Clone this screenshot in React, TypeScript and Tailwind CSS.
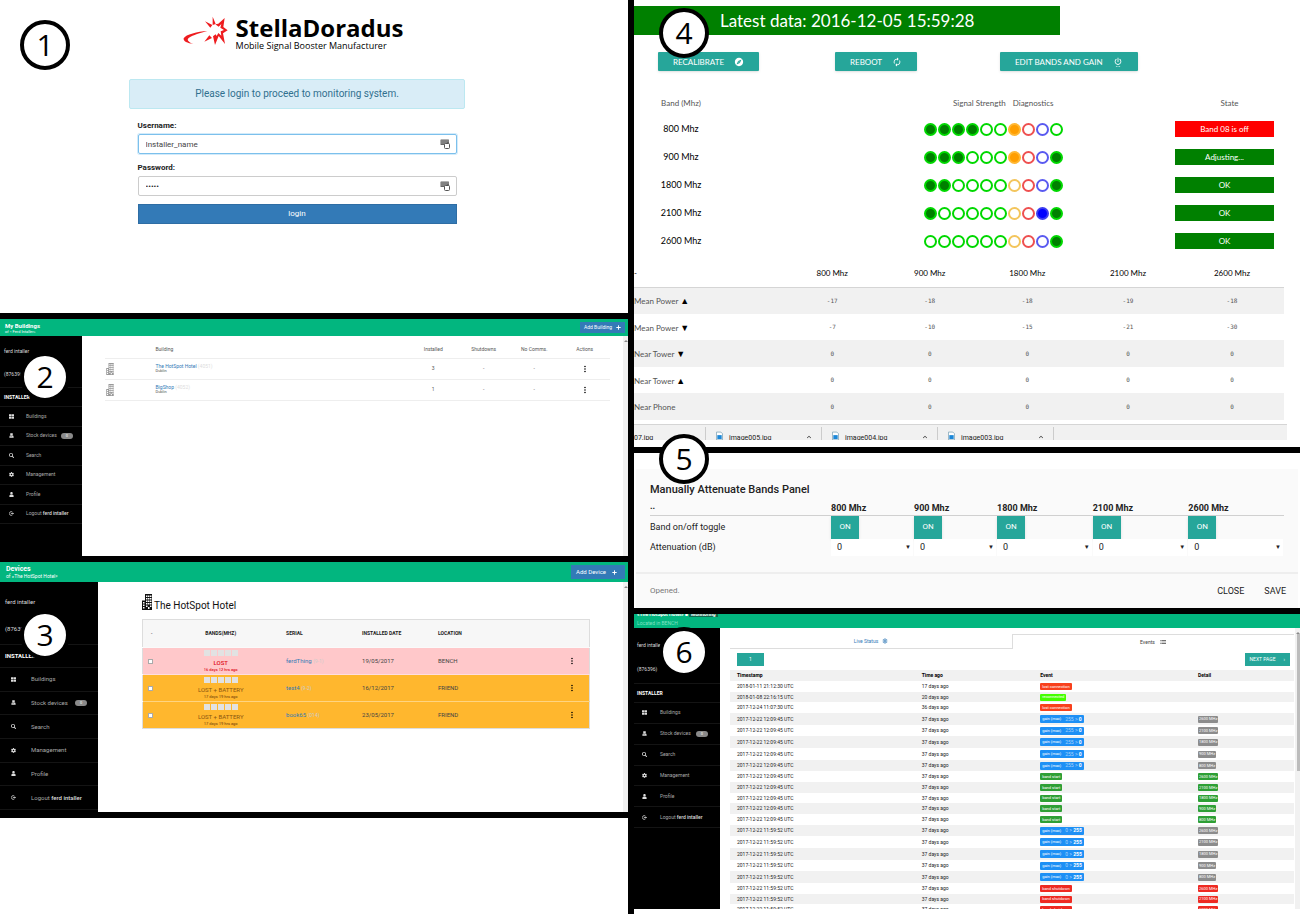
import React from "react";
import clsx from "clsx";
import { FaCog, FaPlus, FaSearch, FaThLarge, FaUser } from "react-icons/fa";
import {
  MdAutorenew,
  MdExplore,
  MdKeyboardArrowUp,
  MdList,
  MdMoreVert,
  MdOutlineSettings,
  MdSettingsPower,
} from "react-icons/md";

const BANDS = ["800 Mhz", "900 Mhz", "1800 Mhz", "2100 Mhz", "2600 Mhz"];

function StepBadge({ step, className }: { step: number; className: string }) {
  return (
    <div
      className={clsx(
        "absolute z-10 flex size-[50px] items-center justify-center rounded-full border-4 border-black bg-white font-['Open_Sans',sans-serif] text-3xl leading-none text-black",
        className
      )}
    >
      {step}
    </div>
  );
}

/* ---------- drawings ---------- */

function StarLogo() {
  return (
    <svg viewBox="0 0 135 90" className="h-[30px] w-[45px] shrink-0" fill="#ee1c1f" aria-hidden="true">
      <path d="M73 45C44 47 8 55 2 67c-2 9 11 15 29 17C15 77 10 71 18 65c12-8 34-14 55-20z" />
      <path d="M66 16l22 11-6 8zM89 2l9 22-9 3zM64 77l15-19 8 8z" />
      <path d="M125 6l-4 27 13 10-14 9 6 32-19-24-11 27-6-26 8-6 3 5 5-9 9 8-2-13 10-4-11-7 3-11-8 8-10-7 9-2z" />
    </svg>
  );
}

function BuildingIcon({ className }: { className: string }) {
  return (
    <svg viewBox="0 0 20 32" className={className} fill="currentColor" aria-hidden="true">
      <path
        fillRule="evenodd"
        d="M6 0h14v32H0V13h6zM8 3v3h3V3zm4 0v3h3V3zm4 0v3h3V3zM8 8v3h3V8zm4 0v3h3V8zm4 0v3h3V8zM8 13v3h3v-3zm4 0v3h3v-3zm4 0v3h3v-3zM8 18v3h3v-3zm4 0v3h3v-3zm4 0v3h3v-3zM8 23v3h3v-3zm8 0v3h3v-3zm-4 3v4h3v-4zM2 16v3h3v-3zm0 5v3h3v-3zm0 5v3h3v-3z"
      />
    </svg>
  );
}

function StockIcon() {
  return (
    <svg viewBox="0 0 16 16" fill="currentColor" className="size-full" aria-hidden="true">
      <path d="M4 1h8v7H4zM2 9h12l1 6H1zm2 3v1h6v-1z" />
    </svg>
  );
}

function LogoutIcon() {
  return (
    <svg viewBox="0 0 16 16" fill="none" stroke="currentColor" strokeWidth="2.4" className="size-full" aria-hidden="true">
      <path d="M11 3.5A6 6 0 1 0 11 12.5M6 8h7" />
      <path d="M11.5 4.5L16 8l-4.5 3.5z" fill="currentColor" stroke="none" />
    </svg>
  );
}

function KeyFillIcon() {
  return (
    <svg viewBox="0 0 20 20" className="pointer-events-none absolute top-[5px] right-[7px] size-2.5" aria-hidden="true">
      <rect x="1" y="1" width="17" height="11" rx="1" fill="#666" />
      <path d="M3 4h2m2 0h2m2 0h2m2 0h2M3 8h2m2 0h2m2 0h2" stroke="#fff" strokeWidth="1.5" />
      <rect x="9" y="9" width="10" height="10" rx="2" fill="#fff" stroke="#555" strokeWidth="2" />
    </svg>
  );
}

/* ---------- shared sidebar ---------- */

const NAV = [
  { label: "Buildings", icon: <FaThLarge className="size-full" /> },
  { label: "Stock devices", icon: <StockIcon />, count: 0 },
  { label: "Search", icon: <FaSearch className="size-full" /> },
  { label: "Management", icon: <FaCog className="size-full" /> },
  { label: "Profile", icon: <FaUser className="size-full" /> },
  { label: "Logout", icon: <LogoutIcon />, user: "ferd intaller" },
];

type SidebarProps = {
  className: string;
  nameClass: string;
  idClass: string;
  roleClass: string;
  navClass: string;
  linkClass: string;
};

function Sidebar({ className, nameClass, idClass, roleClass, navClass, linkClass }: SidebarProps) {
  return (
    <aside className={clsx("shrink-0 bg-black leading-none whitespace-nowrap text-[#ddd]", className)}>
      <p className={clsx("flex items-center", nameClass)}>ferd intaller</p>
      <p className={clsx("flex items-center", idClass)}>(876396)</p>
      <p className={clsx("flex items-center border-y border-[#141414] font-bold text-white", roleClass)}>INSTALLER</p>
      <nav className={clsx("grid auto-rows-fr", navClass)}>
        {NAV.map((item) => (
          <a key={item.label} href="#" className={clsx("flex items-center border-b border-[#141414] text-[#aaa]", linkClass)}>
            <span className="size-[5px] shrink-0 text-[#ddd]">{item.icon}</span>
            <span>
              {item.label} {item.user && <b className="font-medium text-[#ddd]">{item.user}</b>}
            </span>
            {item.count !== undefined && (
              <span className="-ml-2 rounded-full bg-[#8a8a8a] px-[5px] py-px text-[4px] text-white">{item.count}</span>
            )}
          </a>
        ))}
      </nav>
    </aside>
  );
}

function ScrollTrack({ thumb }: { thumb?: boolean }) {
  return (
    <div className="w-[5px] shrink-0 bg-[#f1f1f1]">
      <div className="mx-auto mt-1 size-0 border-x-2 border-b-2 border-x-transparent border-b-[#888]" />
      {thumb && <div className="ml-0.5 h-[137px] bg-[#bcbcbc]" />}
    </div>
  );
}

/* ---------- 1: login ---------- */

function LoginPanel() {
  return (
    <section className="relative flex flex-col items-center bg-white pt-4 pr-[34px] pb-[89px]">
      <StepBadge step={1} className="top-5 left-5" />
      <div className="flex gap-2 pr-2 font-['Open_Sans',sans-serif] text-black">
        <StarLogo />
        <div>
          <h1 className="text-2xl leading-6 font-bold">StellaDoradus</h1>
          <p className="text-[9px] leading-3">Mobile Signal Booster Manufacturer</p>
        </div>
      </div>
      <p className="mt-[27px] w-[336px] rounded-xs border border-[#bce8f1] bg-[#d9edf7] py-1.5 text-center text-[10px] leading-4 text-[#31708f]">
        Please login to proceed to monitoring system.
      </p>
      <form className="mt-[11px] flex w-[319px] flex-col text-[8px] text-[#222]">
        <label htmlFor="username" className="leading-3 font-bold">
          Username:
        </label>
        <div className="relative mt-0.5">
          <input
            id="username"
            defaultValue="Installer_name"
            className="h-5 w-full rounded-xs border border-[#7cc0ec] px-[7px] text-[#444] ring-1 ring-[#d3ebfa] outline-none"
          />
          <KeyFillIcon />
        </div>
        <label htmlFor="password" className="mt-2 leading-3 font-bold">
          Password:
        </label>
        <div className="relative mt-0.5">
          <input
            id="password"
            type="password"
            defaultValue="ferd1"
            className="h-5 w-full rounded-xs border border-[#ccc] px-[7px] text-[#222] outline-none"
          />
          <KeyFillIcon />
        </div>
        <button type="button" className="mt-2 h-5 border border-[#2e6da4] bg-[#337ab7] text-white">
          login
        </button>
      </form>
    </section>
  );
}

/* ---------- 2: buildings ---------- */

const BUILDINGS = [
  { name: "The HotSpot Hotel", code: "(4051)", city: "Dublin", installed: 3 },
  { name: "BigShop", code: "(4052)", city: "Dublin", installed: 1 },
];

function BuildingsPanel() {
  return (
    <section className="relative bg-white text-[5px] leading-none">
      <StepBadge step={2} className="top-[33px] left-5" />
      <header className="flex h-[17px] items-center justify-between bg-[#02b67f] pr-[3px] pl-[5px] text-white">
        <div>
          <h2 className="text-[6px] leading-[7px] font-bold">My Buildings</h2>
          <p className="text-[4px] leading-[5px]">of « Ferd Intaller»</p>
        </div>
        <button type="button" className="flex h-[11px] items-center gap-1 bg-[#337ab7] px-1">
          Add Building <FaPlus className="size-[5px]" />
        </button>
      </header>
      <div className="flex">
        <Sidebar
          className="w-[82px] pb-8"
          nameClass="h-[30px] pl-1"
          idClass="h-4 pl-1"
          roleClass="mt-[5px] h-5 pl-1"
          navClass="h-[117px]"
          linkClass="gap-3 pl-[9px]"
        />
        <div className="flex-1 pr-[13px] pl-[23px]">
          <table className="w-full table-fixed text-center text-[#555]">
            <thead>
              <tr className="h-[22px] border-b border-[#eee]">
                <th className="w-[10%]" />
                <th className="w-[50%] pt-1.5 text-left font-normal">Building</th>
                <th className="pt-1.5 font-normal">Installed</th>
                <th className="pt-1.5 font-normal">Shutdowns</th>
                <th className="pt-1.5 font-normal">No Comms.</th>
                <th className="pt-1.5 font-normal">Actions</th>
              </tr>
            </thead>
            <tbody>
              {BUILDINGS.map((b) => (
                <tr key={b.name} className="h-[21px] border-b border-[#eee]">
                  <td>
                    <BuildingIcon className="ml-px h-3 w-2 text-[#999]" />
                  </td>
                  <td className="text-left">
                    <p>
                      <a href="#" className="text-[#337ab7]">
                        {b.name}
                      </a>{" "}
                      <span className="text-[#ddd]">{b.code}</span>
                    </p>
                    <p className="text-[4px]">{b.city}</p>
                  </td>
                  <td>{b.installed}</td>
                  <td>-</td>
                  <td>-</td>
                  <td>
                    <button type="button" aria-label="Actions" className="align-middle">
                      <MdMoreVert className="size-2.5 text-black" />
                    </button>
                  </td>
                </tr>
              ))}
            </tbody>
          </table>
        </div>
        <ScrollTrack />
      </div>
    </section>
  );
}

/* ---------- 3: devices ---------- */

const DEVICES = [
  { serial: "ferdThing", code: "(9-1)", status: "LOST", ago: "16 days 12 hrs ago", date: "19/05/2017", location: "BENCH", lost: true },
  { serial: "test4", code: "(9-2)", status: "LOST + BATTERY", ago: "17 days 19 hrs ago", date: "16/12/2017", location: "FRIEND", lost: false },
  { serial: "book65", code: "(014)", status: "LOST + BATTERY", ago: "17 days 19 hrs ago", date: "23/05/2017", location: "FRIEND", lost: false },
];

function DevicesPanel() {
  return (
    <section className="relative bg-white text-[6px] leading-none">
      <StepBadge step={3} className="top-12 left-5" />
      <header className="flex h-5 items-center justify-between bg-[#02b67f] pr-[3px] pl-1.5 text-white">
        <div>
          <h2 className="text-[7px] leading-2 font-bold">Devices</h2>
          <p className="text-[5px] leading-1.5">of «The HotSpot Hotel»</p>
        </div>
        <button type="button" className="flex h-3.5 items-center gap-1.5 bg-[#337ab7] pr-2 pl-[5px]">
          Add Device <FaPlus className="size-[5px]" />
        </button>
      </header>
      <div className="flex">
        <Sidebar
          className="w-[98px] pb-0.5"
          nameClass="h-10 pl-[5px]"
          idClass="h-3.5 pl-[5px]"
          roleClass="mt-2 h-6 pl-[5px]"
          navClass="h-[142px]"
          linkClass="gap-[15px] pl-[11px]"
        />
        <div className="flex-1 pt-3 pr-[33px] pl-11">
          <h3 className="flex items-end gap-0.5 text-[10px] leading-[9px] text-[#111]">
            <BuildingIcon className="h-4 w-2.5" />
            The HotSpot Hotel
          </h3>
          <table className="mt-[9px] w-full table-fixed border border-[#ddd] text-left text-[#444]">
            <thead>
              <tr className="h-7 bg-[#f7f7f7] text-[5px] text-[#222]">
                <th className="w-[4%] text-center font-normal">-</th>
                <th className="w-[27%] text-center font-bold">BANDS(MHZ)</th>
                <th className="w-[17%] pl-[5px] font-bold">SERIAL</th>
                <th className="w-[17%] pl-[5px] font-bold">INSTALLED DATE</th>
                <th className="w-[17%] pl-[5px] font-bold">LOCATION</th>
                <th />
              </tr>
            </thead>
            <tbody>
              {DEVICES.map((d) => (
                <tr key={d.serial} className={clsx("h-[27px] border-t border-white/40", d.lost ? "bg-[#ffc8ca]" : "bg-[#ffb72e]")}>
                  <td className="text-center">
                    <input
                      type="checkbox"
                      aria-label={`Select ${d.serial}`}
                      className="block size-[5px] appearance-none border border-[#aaa] bg-white ml-[5px]"
                    />
                  </td>
                  <td className={clsx("text-center", d.lost ? "text-[#e0101c]" : "text-[#8a5510]")}>
                    <div className="flex justify-center gap-px">
                      {[0, 1, 2, 3, 4].map((n) => (
                        <span key={n} className="size-1.5 bg-[#e2e2e2]" />
                      ))}
                    </div>
                    <p className={clsx("mt-1", d.lost && "font-medium")}>{d.status}</p>
                    <p className="mt-0.5 text-[4px] font-medium">{d.ago}</p>
                  </td>
                  <td className="pl-[5px]">
                    <a href="#" className="text-[#337ab7]">
                      {d.serial}
                    </a>{" "}
                    <span className="text-[5px] text-[#ccc]">{d.code}</span>
                  </td>
                  <td className="pl-[5px]">{d.date}</td>
                  <td className="pl-[5px]">{d.location}</td>
                  <td className="pr-3 text-right">
                    <button type="button" aria-label="Actions" className="align-middle">
                      <MdMoreVert className="size-2.5 text-black" />
                    </button>
                  </td>
                </tr>
              ))}
            </tbody>
          </table>
        </div>
        <ScrollTrack />
      </div>
    </section>
  );
}

/* ---------- 4: live status ---------- */

const DOT = {
  on: "border-[#00d800] bg-[#008000]",
  off: "border-[#00d800] bg-white",
  orangeOn: "border-[#ffb733] bg-[#ff9e00]",
  orange: "border-[#f3c55c] bg-white",
  red: "border-[#ee5050] bg-white",
  blueOn: "border-[#3c3cf0] bg-[#0000ff]",
  blue: "border-[#5a5af0] bg-white",
};

type Dot = keyof typeof DOT;

const SIGNALS: { strength: number; diagnostics: Dot[]; state: string; error?: boolean }[] = [
  { strength: 4, diagnostics: ["orangeOn", "red", "blue", "off"], state: "Band 08 is off", error: true },
  { strength: 3, diagnostics: ["orangeOn", "red", "blue", "on"], state: "Adjusting..." },
  { strength: 2, diagnostics: ["orange", "red", "blue", "on"], state: "OK" },
  { strength: 1, diagnostics: ["orange", "red", "blueOn", "on"], state: "OK" },
  { strength: 0, diagnostics: ["orange", "red", "blue", "on"], state: "OK" },
];

const READINGS = [
  { label: "Mean Power", arrow: "▲", values: [-17, -18, -18, -19, -18] },
  { label: "Mean Power", arrow: "▼", values: [-7, -10, -15, -21, -30] },
  { label: "Near Tower", arrow: "▼", values: [0, 0, 0, 0, 0] },
  { label: "Near Tower", arrow: "▲", values: [0, 0, 0, 0, 0] },
  { label: "Near Phone", arrow: "", values: [0, 0, 0, 0, 0] },
];

function SignalDots({ strength, diagnostics }: { strength: number; diagnostics: Dot[] }) {
  const bars: Dot[] = [0, 1, 2, 3, 4, 5].map((n) => (n < strength ? "on" : "off"));
  return (
    <div className="flex gap-px">
      {[...bars, ...diagnostics].map((dot, i) => (
        <span key={i} className={clsx("size-[13px] rounded-full border-2", DOT[dot])} />
      ))}
    </div>
  );
}

function ActionButton({ children }: { children: React.ReactNode }) {
  return (
    <button
      type="button"
      className="flex h-[19px] items-center gap-2.5 rounded-[1px] bg-[#26a69a] px-[15px] text-[8px] leading-none text-white shadow-sm"
    >
      {children}
    </button>
  );
}

function StatusPanel() {
  return (
    <section className="relative bg-white pt-1.5 pb-[7px] font-[Lato,sans-serif] text-[#222]">
      <StepBadge step={4} className="top-2 left-[25px]" />
      <h2 className="w-[64%] bg-[#008000] pl-[86px] text-[17px] leading-[29px] text-white">Latest data: 2016-12-05 15:59:28</h2>
      <div className="mt-[17px] grid grid-cols-[177fr_165fr_300fr] justify-items-start pl-6">
        <ActionButton>
          RECALIBRATE <MdExplore className="size-2.5" />
        </ActionButton>
        <ActionButton>
          REBOOT <MdAutorenew className="size-2.5" />
        </ActionButton>
        <ActionButton>
          EDIT BANDS AND GAIN <MdSettingsPower className="size-2.5" />
        </ActionButton>
      </div>

      <table className="mt-5 w-full table-fixed text-left text-[8px]">
        <thead>
          <tr className="h-6 leading-6 text-[#555]">
            <th className="w-[290px] font-normal">
              <span className="block w-[94px] text-center">Band (Mhz)</span>
            </th>
            <th className="pl-[29px] font-normal">
              <span className="mr-[7px]">Signal Strength</span>
              <span>Diagnostics</span>
            </th>
            <th className="w-[125px] pr-4 text-center font-normal">State</th>
          </tr>
        </thead>
        <tbody>
          {SIGNALS.map((s, i) => (
            <tr key={BANDS[i]} className="h-7">
              <td>
                <span className="block w-[94px] text-center text-[9px] text-black">{BANDS[i]}</span>
              </td>
              <td>
                <SignalDots strength={s.strength} diagnostics={s.diagnostics} />
              </td>
              <td className="pr-[26px]">
                <p className={clsx("text-center leading-4 text-white", s.error ? "bg-[#ff0000]" : "bg-[#008000]")}>{s.state}</p>
              </td>
            </tr>
          ))}
        </tbody>
      </table>

      <div className="pt-[5px] pr-4">
        <table className="w-full table-fixed text-center text-[8px] leading-none text-[#555]">
          <thead>
            <tr className="h-[27px] border-b border-[#d5d5d5] text-[8px] text-black">
              <th className="w-[23%] text-left font-normal">-</th>
              {BANDS.map((band, i) => (
                <th key={band} className={clsx("font-normal", i < 3 ? "w-[15%]" : "w-[16%]")}>
                  {band}
                </th>
              ))}
            </tr>
          </thead>
          <tbody>
            {READINGS.map((row) => (
              <tr key={row.label + row.arrow} className="h-[26px] odd:h-[27px] odd:bg-[#f1f1f1]">
                <td className="text-left">
                  {row.label} <span className="text-[9px] text-black">{row.arrow}</span>
                </td>
                {row.values.map((value, i) => (
                  <td key={i} className="font-['DejaVu_Sans_Mono',monospace] text-[6px]">
                    {value}
                  </td>
                ))}
              </tr>
            ))}
          </tbody>
        </table>
      </div>

      {/* Browser download shelf, cut off at the bottom */}
      <div className="mt-1 mr-[13px] flex h-4 overflow-hidden border-t border-[#d5d5d5] bg-[#f1f1f1] pt-0.5 font-[Roboto,sans-serif] text-[7px] leading-[22px]">
        <p className="w-[72px] border-r border-[#ccc]">07.jpg</p>
        {["image005.jpg", "image004.jpg", "image003.jpg"].map((file) => (
          <p key={file} className="flex w-[116px] border-r border-[#ccc] pr-2 pl-2.5">
            <svg viewBox="0 0 8 10" className="mt-1 mr-1.5 h-2.5 w-[7px] shrink-0" aria-hidden="true">
              <path d="M.5.5h5l2 2v7h-7z" fill="#fff" stroke="#8ab" />
              <path d="M1.5 4h5v4.5h-5z" fill="#1b87d8" />
            </svg>
            <span className="flex-1">{file}</span>
            <MdKeyboardArrowUp className="mt-1.5 size-2" />
          </p>
        ))}
      </div>
    </section>
  );
}

/* ---------- 5: attenuation ---------- */

function AttenuationPanel() {
  return (
    <section className="relative bg-white px-0.5 pt-4 text-[#222]">
      <StepBadge step={5} className="-top-[19px] left-[25px]" />
      <div className="bg-[#fafafa]">
        <div className="px-3.5 pt-3 pb-4">
          <h2 className="text-[11px] leading-[18px] font-medium">Manually Attenuate Bands Panel</h2>
          <table className="w-full table-fixed text-left text-[9px] leading-none">
            <thead>
              <tr className="h-4 border-b border-[#d0d0d0] font-bold">
                <th className="w-[181px]">..</th>
                {BANDS.map((band, i) => (
                  <th key={band} className={clsx("pt-1", i < 2 && "w-[83px]")}>
                    {band}
                  </th>
                ))}
              </tr>
            </thead>
            <tbody>
              <tr className="h-6">
                <td>Band on/off toggle</td>
                {BANDS.map((band) => (
                  <td key={band} className="align-top">
                    <button type="button" className="block h-[23px] w-7 bg-[#26a69a] text-[8px] text-white shadow-sm">
                      ON
                    </button>
                  </td>
                ))}
              </tr>
              <tr>
                <td>Attenuation (dB)</td>
                {BANDS.map((band) => (
                  <td key={band} className="pr-px">
                    <div className="relative bg-white">
                      <select aria-label={`Attenuation ${band}`} className="block h-[17px] w-full appearance-none pl-1.5">
                        <option>0</option>
                      </select>
                      <span className="pointer-events-none absolute top-[5px] right-0.5 text-[6px]">▼</span>
                    </div>
                  </td>
                ))}
              </tr>
            </tbody>
          </table>
        </div>
        <footer className="flex items-center gap-5 border-t-2 border-[#eee] pt-[11px] pr-3 pb-[11px] pl-3.5 text-[9px] leading-3">
          <p className="flex-1 text-[8px] text-[#777]">Opened.</p>
          <button type="button">CLOSE</button>
          <button type="button">SAVE</button>
        </footer>
      </div>
    </section>
  );
}

/* ---------- 6: events ---------- */

const PILL = {
  lost: "bg-[#f8401c]",
  back: "bg-[#44ff00]",
  gain: "bg-[#1e90f5]",
  start: "bg-[#2e9f35]",
  shutdown: "bg-[#ee2a22]",
  muted: "bg-[#8c8c8c]",
};

type EventKind = "lost" | "back" | "gain" | "start" | "shutdown";
type EventRow = { time: string; ago: string; kind: EventKind; from?: number; to?: number; detail?: string };

const EVENT_LABEL = {
  lost: "lost connection",
  back: "reconnected",
  gain: "gain (max)",
  start: "band start",
  shutdown: "band shutdown",
};

const MHZ = ["2600 MHz", "2100 MHz", "1800 MHz", "900 MHz", "800 MHz"];
const NOON = { time: "2017-12-22 12:09:45 UTC", ago: "37 days ago" };
const BEFORE_NOON = { time: "2017-12-22 11:59:52 UTC", ago: "37 days ago" };

const EVENTS: EventRow[] = [
  { time: "2018-01-11 21:12:30 UTC", ago: "17 days ago", kind: "lost" },
  { time: "2018-01-08 22:16:15 UTC", ago: "20 days ago", kind: "back" },
  { time: "2017-12-24 11:07:30 UTC", ago: "36 days ago", kind: "lost" },
  ...MHZ.map((detail) => ({ ...NOON, kind: "gain" as const, from: 255, to: 0, detail })),
  ...MHZ.map((detail) => ({ ...NOON, kind: "start" as const, detail })),
  ...MHZ.map((detail) => ({ ...BEFORE_NOON, kind: "gain" as const, from: 0, to: 255, detail })),
  ...MHZ.slice(0, 3).map((detail) => ({ ...BEFORE_NOON, kind: "shutdown" as const, detail })),
];

function rowHeight(kind: EventKind, index: number) {
  if (kind === "gain") return index % 3 === 1 ? "h-[11px]" : "h-3";
  return index % 3 === 1 ? "h-2.5" : "h-[11px]";
}

function EventsPanel() {
  return (
    <section className="relative bg-white text-[5px] leading-none">
      <StepBadge step={6} className="top-[13px] left-[25px]" />
      <header className="h-3.5 overflow-hidden bg-[#02b67f] pl-[3px] text-white">
        <p className="-mt-0.5 h-1.5 font-bold">
          «The HotSpot Hotel» ■ <span className="bg-[#12694e] px-0.5">Monitoring</span>
        </p>
        <p className="mt-[3px] text-[#7fe0c2]">Located in BENCH</p>
      </header>
      <div className="flex h-[281px] overflow-hidden">
        <Sidebar
          className="w-[86px]"
          nameClass="h-[34px] pl-[3px]"
          idClass="h-3.5 pl-[3px]"
          roleClass="mt-[7px] h-5 pl-[3px]"
          navClass="h-[125px]"
          linkClass="gap-[13px] pl-2"
        />
        <div className="min-w-0 flex-1 pt-1.5 pr-px pl-2.5">
          <div className="grid grid-cols-2 text-center text-[#444]">
            <a href="#" className="flex h-[15px] items-center justify-center gap-1 border-b border-[#ddd] text-[#337ab7]">
              Live Status <MdOutlineSettings className="size-1.5" />
            </a>
            <a href="#" className="flex h-[15px] items-center justify-center gap-1 border-t border-l border-[#ddd]">
              Events <MdList className="size-2" />
            </a>
          </div>
          <div className="flex items-center justify-between py-1 pr-1 pl-[7px]">
            <button type="button" className="h-[13px] w-[27px] bg-[#26a69a] text-white">
              1
            </button>
            <button type="button" className="flex h-[13px] items-center gap-2 bg-[#26a69a] px-[5px] text-white">
              NEXT PAGE <span>›</span>
            </button>
          </div>
          <table className="w-full table-fixed text-left text-[#222]">
            <thead>
              <tr className="h-[11px] bg-[#f1f1f1] font-bold text-black">
                <th className="w-[34%] pl-[7px]">Timestamp</th>
                <th className="w-[21%]">Time ago</th>
                <th className="w-[28%]">Event</th>
                <th>Detail</th>
              </tr>
            </thead>
            <tbody>
              {EVENTS.map((event, i) => (
                <tr key={i} className={clsx("even:bg-[#f1f1f1]", rowHeight(event.kind, i))}>
                  <td className="pl-[7px]">{event.time}</td>
                  <td>{event.ago}</td>
                  <td>
                    <span
                      className={clsx(
                        "flex w-fit items-center rounded-[1px] px-0.5 text-[4px] text-white",
                        event.kind === "gain" ? "h-2" : "h-[7px]",
                        PILL[event.kind]
                      )}
                    >
                      {EVENT_LABEL[event.kind]}
                      {event.kind === "gain" && (
                        <span className="ml-1 text-[5px] text-white/60">
                          {event.from} &gt; <b className="text-white">{event.to}</b>
                        </span>
                      )}
                    </span>
                  </td>
                  <td>
                    {event.detail && (
                      <span
                        className={clsx(
                          "flex h-[7px] w-fit items-center rounded-[1px] px-px text-[4px] text-white",
                          event.kind === "gain" ? PILL.muted : PILL[event.kind]
                        )}
                      >
                        {event.detail}
                      </span>
                    )}
                  </td>
                </tr>
              ))}
            </tbody>
          </table>
        </div>
        <ScrollTrack thumb />
      </div>
    </section>
  );
}

export default function App() {
  return (
    <main className="grid min-h-screen grid-cols-[minmax(0,628fr)_minmax(0,666fr)] gap-x-1.5 bg-black font-[Roboto,sans-serif]">
      <div className="flex flex-col gap-1.5">
        <LoginPanel />
        <BuildingsPanel />
        <DevicesPanel />
        <div className="flex-1 bg-white" />
      </div>
      <div className="flex flex-col">
        <StatusPanel />
        <div className="h-1.5" />
        <AttenuationPanel />
        <div className="h-1.5" />
        <EventsPanel />
        <div className="flex-1 bg-white" />
      </div>
    </main>
  );
}
